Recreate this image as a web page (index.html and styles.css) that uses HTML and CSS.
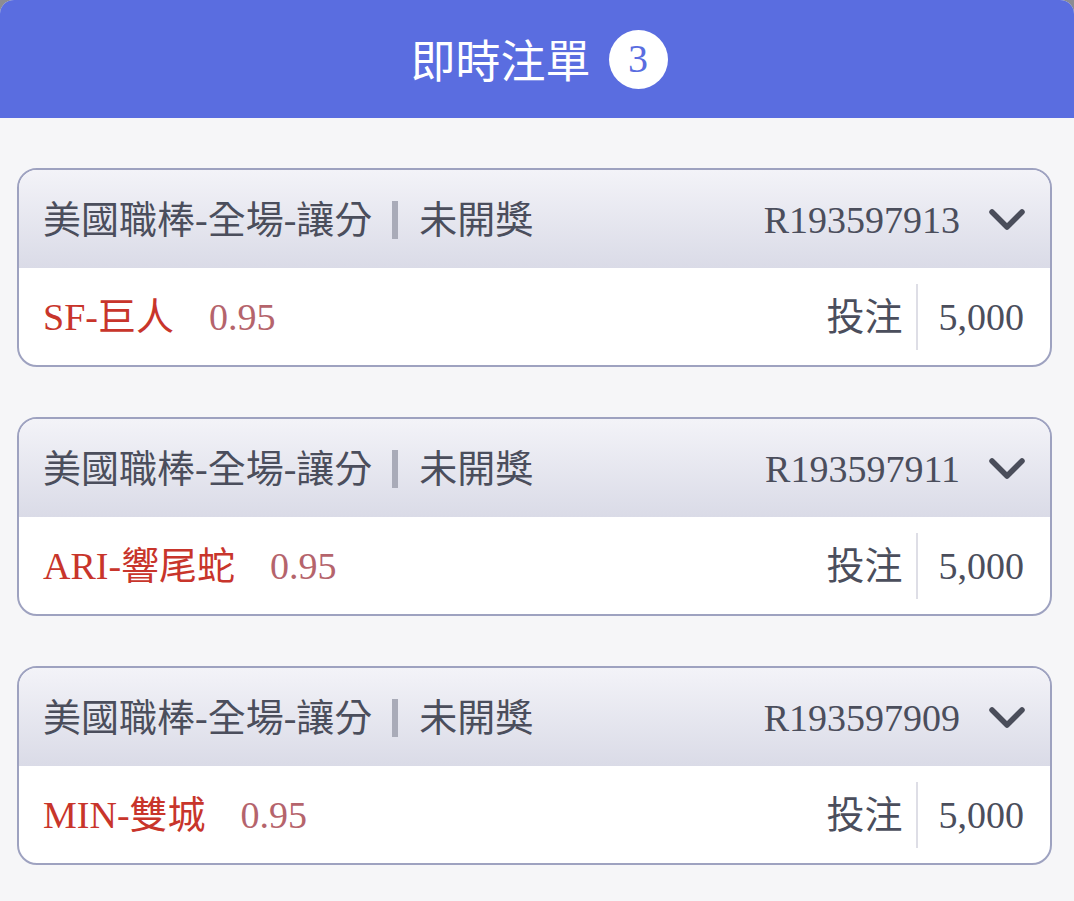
FILE: index.html
```html
<!DOCTYPE html>
<html lang="zh-Hant">
<head>
<meta charset="utf-8">
<title>即時注單</title>
<link rel="stylesheet" href="styles.css">
</head>
<body>
<div class="page">
  <header class="topbar">
    <span class="topbar-title">即時注單</span>
    <span class="badge">3</span>
  </header>
  <main class="list">
    <section class="card">
      <div class="card-head">
        <div class="head-left">
          <span class="market">美國職棒-全場-讓分</span>
          <span class="sep"></span>
          <span class="status">未開獎</span>
        </div>
        <div class="head-right">
          <span class="order">R193597913</span>
          <svg class="chev" viewBox="0 0 36 22" width="36" height="22"><path d="M3 3 L18 18 L33 3" fill="none" stroke="#4a4d5a" stroke-width="5.5" stroke-linecap="round" stroke-linejoin="round"/></svg>
        </div>
      </div>
      <div class="card-body">
        <div class="pick"><span class="team">SF-巨人</span><span class="odds">0.95</span></div>
        <div class="stake"><span class="stake-label">投注</span><span class="vline"></span><span class="amount">5,000</span></div>
      </div>
    </section>
    <section class="card">
      <div class="card-head">
        <div class="head-left">
          <span class="market">美國職棒-全場-讓分</span>
          <span class="sep"></span>
          <span class="status">未開獎</span>
        </div>
        <div class="head-right">
          <span class="order">R193597911</span>
          <svg class="chev" viewBox="0 0 36 22" width="36" height="22"><path d="M3 3 L18 18 L33 3" fill="none" stroke="#4a4d5a" stroke-width="5.5" stroke-linecap="round" stroke-linejoin="round"/></svg>
        </div>
      </div>
      <div class="card-body">
        <div class="pick"><span class="team">ARI-響尾蛇</span><span class="odds">0.95</span></div>
        <div class="stake"><span class="stake-label">投注</span><span class="vline"></span><span class="amount">5,000</span></div>
      </div>
    </section>
    <section class="card">
      <div class="card-head">
        <div class="head-left">
          <span class="market">美國職棒-全場-讓分</span>
          <span class="sep"></span>
          <span class="status">未開獎</span>
        </div>
        <div class="head-right">
          <span class="order">R193597909</span>
          <svg class="chev" viewBox="0 0 36 22" width="36" height="22"><path d="M3 3 L18 18 L33 3" fill="none" stroke="#4a4d5a" stroke-width="5.5" stroke-linecap="round" stroke-linejoin="round"/></svg>
        </div>
      </div>
      <div class="card-body">
        <div class="pick"><span class="team">MIN-雙城</span><span class="odds">0.95</span></div>
        <div class="stake"><span class="stake-label">投注</span><span class="vline"></span><span class="amount">5,000</span></div>
      </div>
    </section>
  </main>
</div>
</body>
</html>
```
FILE: styles.css
```css
html, body {
  margin: 0;
  padding: 0;
  background: #8c8c92;
}
body {
  font-family: "Liberation Serif", "Noto Sans CJK TC", serif;
}
.page {
  width: 1074px;
  min-height: 901px;
  background: #f6f6f8;
  border-radius: 14px 14px 0 0;
  overflow: hidden;
}
.topbar {
  height: 118px;
  background: #5a6de0;
  display: flex;
  align-items: center;
  justify-content: center;
  gap: 18px;
}
.topbar-title {
  font-family: "Noto Sans CJK TC", sans-serif;
  font-size: 45px;
  color: #ffffff;
  line-height: 1;
  margin-left: 4px;
  margin-top: -2px;
}
.badge {
  width: 59px;
  height: 59px;
  border-radius: 50%;
  background: #ffffff;
  color: #5a6de0;
  font-family: "Liberation Serif", serif;
  font-size: 40px;
  display: flex;
  align-items: center;
  justify-content: center;
  line-height: 1;
}
.list {
  padding: 50px 22px 34px 17px;
  display: flex;
  flex-direction: column;
  gap: 50px;
}
.card {
  border: 2px solid #9ea2c0;
  border-radius: 20px;
  overflow: hidden;
  background: #ffffff;
}
.card-head {
  height: 98px;
  background: linear-gradient(#f3f3f8, #dadbe7);
  display: flex;
  align-items: center;
  justify-content: space-between;
  padding: 2px 25px 0 24px;
  box-sizing: border-box;
  color: #4b4e5c;
}
.head-left, .head-right, .pick, .stake {
  display: flex;
  align-items: center;
}
.market, .status {
  font-size: 38px;
  line-height: 1;
}
.sep {
  width: 6px;
  height: 38px;
  background: #a9abb8;
  margin: 0 21px 0 20px;
}
.order {
  font-size: 38px;
  line-height: 1;
  color: #4b4e5c;
}
.chev {
  margin-left: 29px;
  display: block;
}
.card-body {
  height: 97px;
  display: flex;
  align-items: center;
  justify-content: space-between;
  padding: 0 26px 0 24px;
}
.team {
  font-size: 38px;
  color: #c8352b;
  line-height: 1;
}
.odds {
  font-size: 38px;
  color: #b5646c;
  margin-left: 35px;
  line-height: 1;
}
.stake-label {
  font-size: 38px;
  color: #4b4e5c;
  line-height: 1;
}
.vline {
  width: 2px;
  height: 66px;
  background: #dedee6;
  margin: 0 21px 0 13px;
}
.amount {
  font-size: 38px;
  color: #4b4e5c;
  line-height: 1;
}
```
